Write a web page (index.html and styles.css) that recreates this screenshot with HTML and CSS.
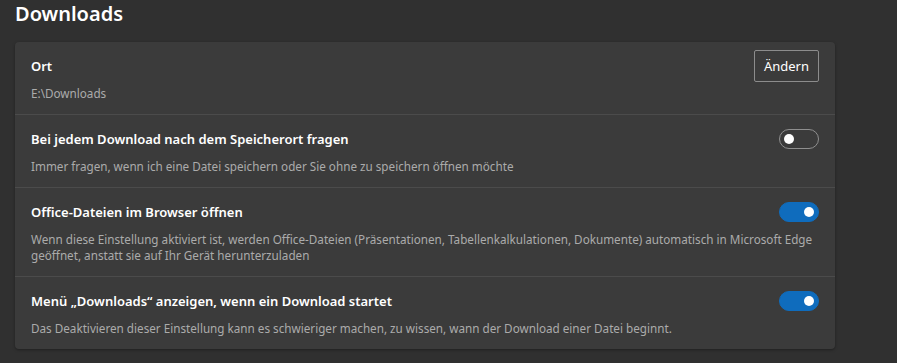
FILE: index.html
```html
<!DOCTYPE html>
<html lang="de">
<head>
    <meta charset="UTF-8">
    <meta name="viewport" content="width=device-width, initial-scale=1.0">
    <title>Downloads</title>
    <link rel="stylesheet" href="styles.css">
</head>
<body>
    <h1 class="page-title">Downloads</h1>

    <section class="card">
        <div class="row row-first">
            <div class="row-head">
                <div class="row-title">Ort</div>
                <button class="button">Ändern</button>
            </div>
            <div class="row-desc">E:\Downloads</div>
        </div>

        <div class="row">
            <div class="row-head">
                <div class="row-title">Bei jedem Download nach dem Speicherort fragen</div>
                <span class="toggle"></span>
            </div>
            <div class="row-desc">Immer fragen, wenn ich eine Datei speichern oder Sie ohne zu speichern öffnen möchte</div>
        </div>

        <div class="row">
            <div class="row-head">
                <div class="row-title">Office-Dateien im Browser öffnen</div>
                <span class="toggle on"></span>
            </div>
            <div class="row-desc">Wenn diese Einstellung aktiviert ist, werden Office-Dateien (Präsentationen, Tabellenkalkulationen, Dokumente) automatisch in Microsoft Edge geöffnet, anstatt sie auf Ihr Gerät herunterzuladen</div>
        </div>

        <div class="row">
            <div class="row-head">
                <div class="row-title">Menü „Downloads“ anzeigen, wenn ein Download startet</div>
                <span class="toggle on"></span>
            </div>
            <div class="row-desc">Das Deaktivieren dieser Einstellung kann es schwieriger machen, zu wissen, wann der Download einer Datei beginnt.</div>
        </div>
    </section>
</body>
</html>
```

FILE: styles.css
```css
:root {
    --page-bg: #303030;
    --card-bg: #3b3b3b;
    --line: #4b4b4b;
    --text: #ffffff;
    --muted: #ababab;
    --accent: #0f6cbd;
}
body {
    font-family: "Noto Sans", "Open Sans", sans-serif;
    background-color: var(--page-bg);
    color: var(--text);
    margin: 0;
    padding: 0 62px 15px 15px;
}
.page-title {
    margin: 0;
    padding-top: 1px;
    font-size: 20px;
    font-weight: 600;
    line-height: 26px;
    height: 41px;
}
.card {
    background-color: var(--card-bg);
    border-radius: 4px;
    box-shadow: 0 1px 3px rgba(0,0,0,0.35);
}
.row {
    padding: 14px 16px 13px 16px;
    border-top: 1px solid var(--line);
}
.row-first {
    border-top: none;
    padding-top: 8px;
}
.row-head {
    display: flex;
    align-items: center;
    justify-content: space-between;
    gap: 16px;
}
.row-title {
    font-size: 13px;
    font-weight: 600;
    line-height: 20px;
}
.row-desc {
    font-size: 11.7px;
    line-height: 16px;
    color: var(--muted);
    margin-top: 9px;
}
.row-first .row-desc {
    margin-top: 3px;
}
.button {
    font-family: inherit;
    font-size: 13px;
    color: var(--text);
    background-color: transparent;
    border: 1px solid #8c8c8c;
    border-radius: 2px;
    width: 65px;
    height: 32px;
    padding: 0;
}
.toggle {
    position: relative;
    flex: none;
    width: 40px;
    height: 20px;
    box-sizing: border-box;
    border: 1px solid #8f8f8f;
    border-radius: 10px;
}
.toggle::after {
    content: "";
    position: absolute;
    top: 4px;
    left: 4px;
    width: 10px;
    height: 10px;
    border-radius: 50%;
    background-color: #ffffff;
}
.toggle.on {
    background-color: var(--accent);
    border-color: var(--accent);
}
.toggle.on::after {
    left: 24px;
}
```
